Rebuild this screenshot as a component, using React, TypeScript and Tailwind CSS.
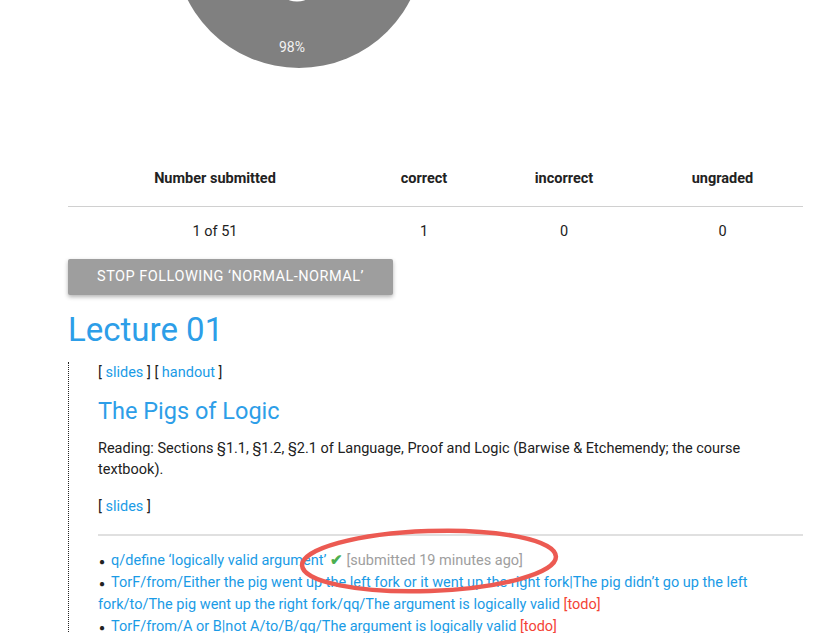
import React from "react";

export default function App() {
  return (
    <div className="relative w-[831px] h-[633px] overflow-hidden bg-white text-[#212121]" style={{ fontFamily: "Roboto, 'Liberation Sans', sans-serif" }}>
      {/* pie chart */}
      <div className="relative h-[152px]">
        <svg width="831" height="152" className="absolute left-0 top-0">
          <circle cx="299" cy="-57" r="125" fill="#808080" />
          <ellipse cx="297" cy="-2" rx="10" ry="3.5" fill="#ffffff" />
          <text x="292" y="52" textAnchor="middle" fill="#f2f2f2" fontSize="14" fontFamily="Roboto, sans-serif">98%</text>
        </svg>
      </div>

      <div className="pl-[68px] pr-[28px]">
        {/* table */}
        <div className="grid grid-cols-[294px_124px_156px_161px] h-[55px] items-center border-b border-[#d0d0d0] text-[14.5px] font-bold text-[#222]">
          <div className="text-center">Number submitted</div>
          <div className="text-center">correct</div>
          <div className="text-center">incorrect</div>
          <div className="text-center">ungraded</div>
        </div>
        <div className="grid grid-cols-[294px_124px_156px_161px] h-[49px] items-center text-[14.5px] text-[#222]">
          <div className="text-center">1 of 51</div>
          <div className="text-center">1</div>
          <div className="text-center">0</div>
          <div className="text-center">0</div>
        </div>

        <button className="mt-[3px] h-[36px] w-[325px] rounded-[2px] bg-[#9e9e9e] text-white text-[14.5px] tracking-[0.5px] shadow-[0_2px_4px_rgba(0,0,0,0.3)]">
          STOP FOLLOWING ‘NORMAL-NORMAL’
        </button>

        <h1 className="mt-[13px] text-[33px] leading-[44px] text-[#2d9ee8]">Lecture 01</h1>

        <div className="mt-[10px] border-l border-dotted border-[#222] pl-[29px]">
          <div className="text-[14.5px] leading-[21px]">
            [ <span className="text-[#1a9be6]">slides</span> ] [ <span className="text-[#1a9be6]">handout</span> ]
          </div>
          <h2 className="mt-[11px] text-[23.5px] leading-[34px] text-[#2d9ee8]">The Pigs of Logic</h2>
          <p className="mt-[10px] text-[14.5px] leading-[21px]">
            Reading: Sections §1.1, §1.2, §2.1 of Language, Proof and Logic (Barwise &amp; Etchemendy; the course textbook).
          </p>
          <div className="mt-[16px] text-[14.5px] leading-[21px]">
            [ <span className="text-[#1a9be6]">slides</span> ]
          </div>
          <div className="mt-[17px] h-[2px] bg-[#e0e0e0]" />
          <ul className="mt-[14px] text-[14.5px] leading-[22px] text-[#1a9be6]">
            <li>
              <span className="text-[#222] text-[10px] leading-[0] mr-[6px] ml-[1px]">●</span>
              q/define ‘logically valid argument’ <span className="text-[#4caf50] font-bold leading-[0]">✔</span>{" "}
              <span className="text-[#9e9e9e]">[submitted 19 minutes ago]</span>
            </li>
            <li>
              <span className="text-[#222] text-[10px] leading-[0] mr-[6px] ml-[1px]">●</span>
              TorF/from/Either the pig went up the left fork or it went up the right fork|The pig didn’t go up the left fork/to/The pig went up the right fork/qq/The argument is logically valid{" "}
              <span className="text-[#f44336]">[todo]</span>
            </li>
            <li>
              <span className="text-[#222] text-[10px] leading-[0] mr-[6px] ml-[1px]">●</span>
              TorF/from/A or B|not A/to/B/qq/The argument is logically valid{" "}
              <span className="text-[#f44336]">[todo]</span>
            </li>
          </ul>
        </div>
      </div>

      {/* annotation ellipse */}
      <svg width="831" height="633" className="absolute left-0 top-0 pointer-events-none">
        <ellipse cx="429" cy="561" rx="127" ry="30" fill="none" stroke="#ec5a52" strokeWidth="4.5" transform="rotate(-2 429 561)" />
      </svg>
    </div>
  );
}
